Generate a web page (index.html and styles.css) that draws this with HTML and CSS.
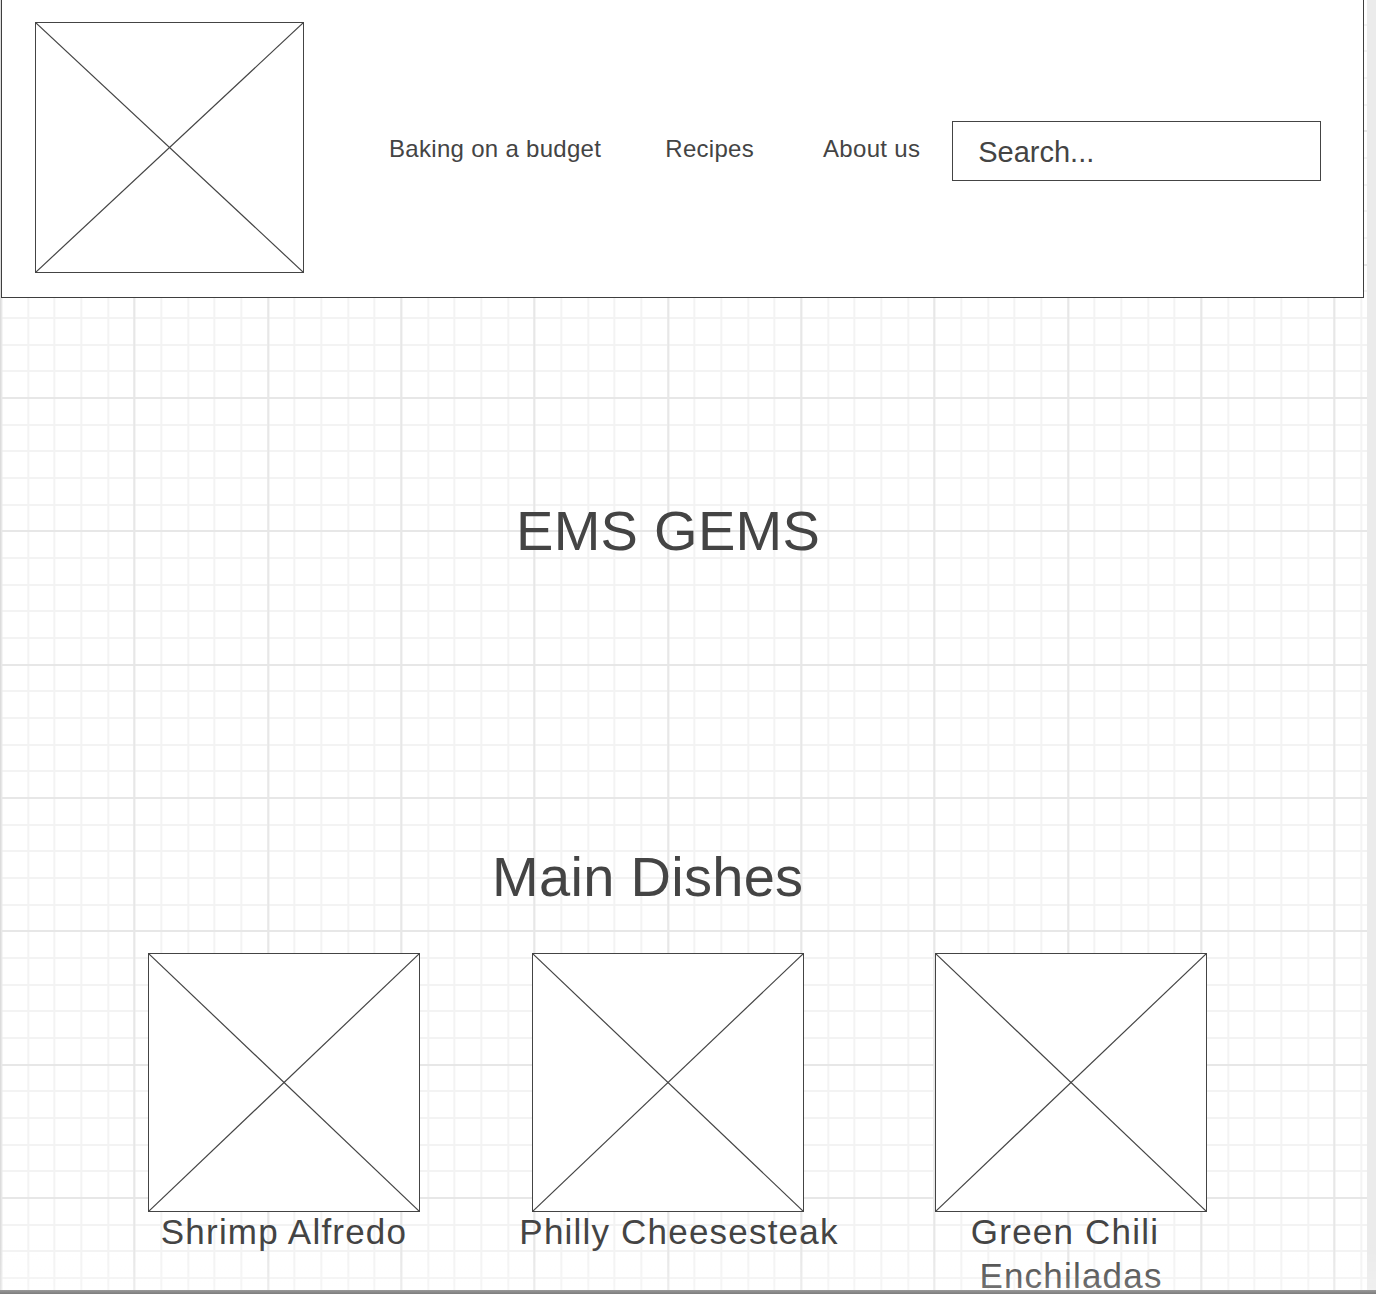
FILE: index.html
```html
<!DOCTYPE html>
<html lang="en">
<head>
<meta charset="utf-8">
<title>EMS GEMS</title>
<link rel="stylesheet" href="styles.css">
</head>
<body>
<div class="canvas">
  <header class="site-header">
    <div class="placeholder logo">
      <svg viewBox="0 0 100 100" preserveAspectRatio="none"><line x1="0" y1="0" x2="100" y2="100"/><line x1="100" y1="0" x2="0" y2="100"/></svg>
    </div>
    <nav class="nav">
      <a class="nav-link nav-budget" href="#">Baking on a budget</a>
      <a class="nav-link nav-recipes" href="#">Recipes</a>
      <a class="nav-link nav-about" href="#">About us</a>
      <div class="search">Search...</div>
    </nav>
  </header>

  <h1 class="site-title">EMS GEMS</h1>
  <h2 class="section-title">Main Dishes</h2>

  <div class="cards">
    <div class="card card-1">
      <div class="placeholder thumb">
        <svg viewBox="0 0 100 100" preserveAspectRatio="none"><line x1="0" y1="0" x2="100" y2="100"/><line x1="100" y1="0" x2="0" y2="100"/></svg>
      </div>
      <div class="caption">Shrimp Alfredo</div>
    </div>
    <div class="card card-2">
      <div class="placeholder thumb">
        <svg viewBox="0 0 100 100" preserveAspectRatio="none"><line x1="0" y1="0" x2="100" y2="100"/><line x1="100" y1="0" x2="0" y2="100"/></svg>
      </div>
      <div class="caption caption-shift">Philly Cheesesteak</div>
    </div>
    <div class="card card-3">
      <div class="placeholder thumb">
        <svg viewBox="0 0 100 100" preserveAspectRatio="none"><line x1="0" y1="0" x2="100" y2="100"/><line x1="100" y1="0" x2="0" y2="100"/></svg>
      </div>
      <div class="caption caption-narrow"><span class="caption-line caption-line-first">Green Chili</span> <span class="caption-line">Enchiladas</span></div>
    </div>
  </div>
</div>
<div class="strip"></div>
<div class="fade"></div>
<div class="bottom-bar"></div>
</body>
</html>
```

FILE: styles.css
```css
* { box-sizing: border-box; }

html, body {
  margin: 0;
  padding: 0;
}

body {
  width: 1376px;
  height: 1294px;
  overflow: hidden;
  display: flex;
  font-family: "Liberation Sans", Arial, sans-serif;
  color: #444;
  background: #fff;
}

.canvas {
  flex: 1;
  height: 1294px;
  border-left: 1px solid #dcdcdc;
  background-color: #fff;
  background-origin: border-box;
  background-image:
    repeating-linear-gradient(to right, #e7e7e7 0 2px, transparent 2px 133.333px),
    repeating-linear-gradient(to bottom, #e7e7e7 0 2px, transparent 2px 133.333px),
    repeating-linear-gradient(to right, #f3f3f3 0 2px, transparent 2px 26.6667px),
    repeating-linear-gradient(to bottom, #f3f3f3 0 2px, transparent 2px 26.6667px);
  background-position: 0.3px -3px, 0.3px -3px, 0.3px -3px, 0.3px -3px;
}

.strip {
  width: 9px;
  height: 1294px;
  background: #ebebeb;
}

/* header */
.site-header {
  margin-top: -1px;
  width: 1363px;
  height: 299px;
  background: #fff;
  border: 1px solid #3e3e3e;
  padding-left: 33px;
  display: flex;
  align-items: flex-start;
}

.placeholder {
  background: #fff;
  border: 1px solid #444;
}

.placeholder svg {
  display: block;
  width: 100%;
  height: 100%;
}

.placeholder line {
  stroke: #444;
  stroke-width: 1.2;
  vector-effect: non-scaling-stroke;
}

.logo {
  width: 269px;
  height: 251px;
  margin-top: 22px;
}

.nav {
  display: flex;
  align-items: flex-start;
  margin-top: 121px;
  margin-left: 85px;
}

.nav-link {
  font-size: 24px;
  line-height: 28px;
  letter-spacing: 0.3px;
  color: #444;
  text-decoration: none;
  margin-top: 14px;
}

.nav-recipes { margin-left: 64px; }
.nav-about { margin-left: 69px; }

.search {
  margin-left: 32px;
  width: 369px;
  height: 60px;
  border: 1px solid #444;
  background: #fff;
  font-size: 29px;
  line-height: 34px;
  padding: 13px 0 0 25px;
  color: #444;
}

/* titles */
.site-title,
.section-title {
  margin: 0;
  font-weight: normal;
  font-size: 56px;
  line-height: 64px;
  color: #444;
}

.site-title {
  margin-top: 201px;
  padding-left: 515px;
  letter-spacing: 0.3px;
}

.section-title {
  margin-top: 282px;
  padding-left: 491px;
  letter-spacing: 0.3px;
}

/* cards */
.cards {
  display: flex;
  align-items: flex-start;
  margin-top: 44px;
  margin-left: 147px;
}

.card {
  width: 272px;
}

.card-2 { margin-left: 112px; }
.card-3 { margin-left: 131px; }

.thumb {
  width: 272px;
  height: 259px;
}

.caption {
  margin: -2px -50px 0;
  font-size: 35px;
  line-height: 44px;
  letter-spacing: 1.2px;
  text-align: center;
  color: #444;
}

.caption-shift {
  padding-left: 22px;
}

.caption-narrow {
  margin-left: 0;
  margin-right: 0;
  padding: 0;
}

.caption-line {
  display: block;
}

.caption-line-first {
  padding-right: 12px;
}

/* bottom overlays */
.fade {
  position: fixed;
  left: 0;
  right: 0;
  bottom: 4px;
  height: 45px;
  background: linear-gradient(to bottom, rgba(255,255,255,0), rgba(255,255,255,0.25));
  pointer-events: none;
}

.bottom-bar {
  position: fixed;
  left: 0;
  right: 0;
  bottom: 0;
  height: 4px;
  background: linear-gradient(to bottom, #9a9a9a, #7c7c7c);
}
```
